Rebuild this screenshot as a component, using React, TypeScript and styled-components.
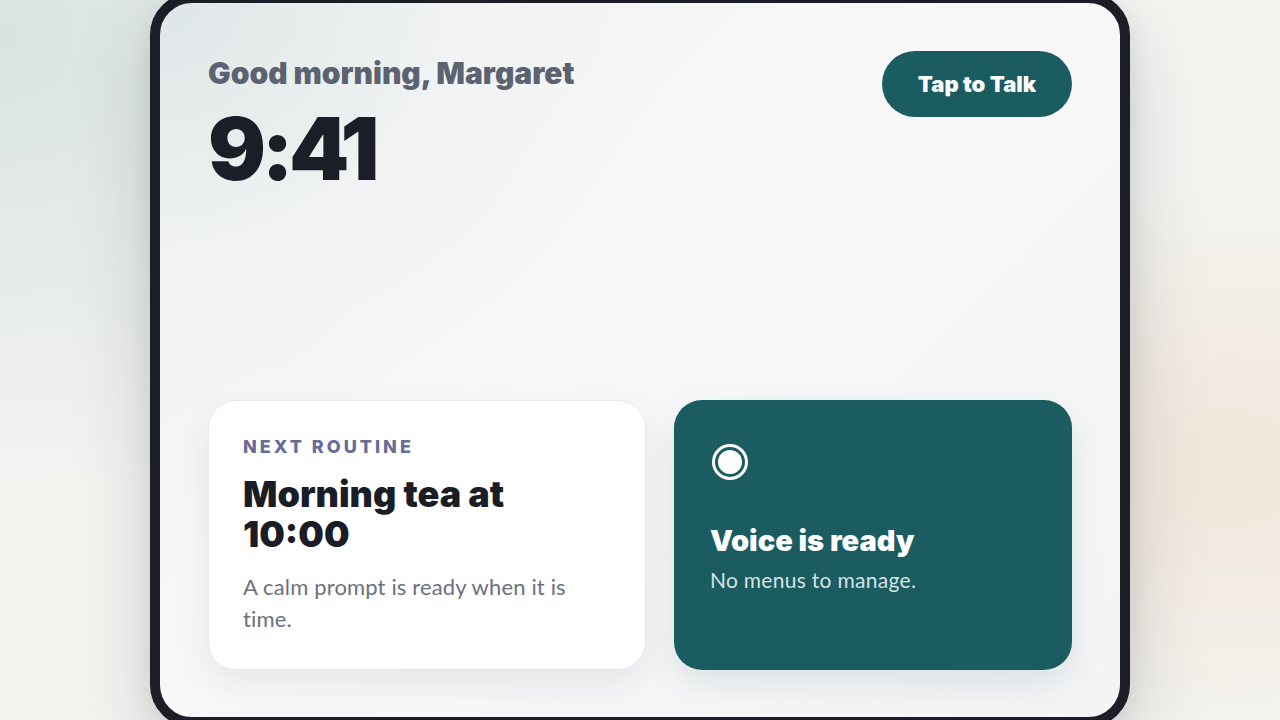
import React from "react";
import styled, { createGlobalStyle } from "styled-components";

const GlobalStyle = createGlobalStyle`
  * { box-sizing: border-box; }
  html, body { margin: 0; padding: 0; height: 100%; }
  body {
    font-family: "Lato", "Noto Sans", sans-serif;
    overflow: hidden;
  }
  #root { height: 100%; }
`;

const heavy = `"Inter", "Noto Sans", sans-serif`;

const Page = styled.main`
  height: 100vh;
  width: 100vw;
  display: flex;
  align-items: center;
  justify-content: center;
  background:
    radial-gradient(ellipse 55% 85% at 0% 5%, rgba(217, 227, 224, 1) 0%, rgba(217, 227, 224, 0) 75%),
    radial-gradient(ellipse 35% 50% at 96% 65%, rgba(241, 230, 218, 1) 0%, rgba(241, 230, 218, 0) 80%),
    #f4f4f1;
`;

const Device = styled.div`
  flex: none;
  width: 980px;
  height: 734px;
  border: 10px solid #1b1e27;
  border-radius: 42px;
  overflow: hidden;
  box-shadow: 0 30px 80px rgba(30, 40, 45, 0.18), 0 8px 24px rgba(30, 40, 45, 0.08);
  background:
    radial-gradient(ellipse 70% 80% at 0% 0%, #dfe6e7 0%, rgba(240, 242, 243, 0.6) 45%, rgba(247, 247, 248, 0) 75%),
    linear-gradient(135deg, #eef1f2 0%, #f8f8f8 45%, #f4f4f6 100%);
`;

const Screen = styled.div`
  height: 100%;
  padding: 48px;
  display: flex;
  flex-direction: column;
  justify-content: space-between;
`;

const TopRow = styled.header`
  display: flex;
  justify-content: space-between;
  align-items: flex-start;
`;

const Greeting = styled.div`
  display: flex;
  flex-direction: column;
`;

const Hello = styled.h2`
  margin: 0;
  font-family: ${heavy};
  font-size: 30px;
  line-height: 44px;
  font-weight: 900;
  color: #5a636f;
`;

const Clock = styled.h1`
  margin: 6px 0 0;
  font-family: ${heavy};
  font-size: 86px;
  line-height: 96px;
  font-weight: 900;
  letter-spacing: -4.5px;
  color: #1b1e26;
`;

const TalkButton = styled.button`
  width: 190px;
  height: 66px;
  border: none;
  border-radius: 33px;
  background: #1b5c60;
  color: #ffffff;
  font-family: ${heavy};
  font-size: 22px;
  font-weight: 900;
  cursor: pointer;
`;

const Cards = styled.section`
  display: grid;
  grid-template-columns: 1.1fr 1fr;
  gap: 28px;
  height: 269px;
`;

const RoutineCard = styled.article`
  background: #ffffff;
  border: 1px solid #e9e9ec;
  border-radius: 28px;
  padding: 34px 34px;
  box-shadow: 0 14px 34px rgba(30, 35, 45, 0.08);
`;

const Label = styled.div`
  font-family: ${heavy};
  font-size: 18px;
  line-height: 24px;
  font-weight: 800;
  letter-spacing: 3px;
  color: #666c98;
  text-transform: uppercase;
`;

const RoutineTitle = styled.h3`
  margin: 15px 0 0;
  font-family: ${heavy};
  font-size: 36px;
  line-height: 40px;
  font-weight: 900;
  color: #1a1d26;
`;

const Body = styled.p<{ $light?: boolean }>`
  margin: 17px 0 0;
  font-size: 22px;
  line-height: 32px;
  font-weight: 400;
  letter-spacing: 0.15px;
  color: ${(p) => (p.$light ? "#d3e2e1" : "#6b717c")};
`;

const VoiceCard = styled.article`
  background: #1b5c61;
  border-radius: 28px;
  padding: 44px 36px 34px;
  box-shadow: 0 14px 34px rgba(27, 92, 97, 0.12);
  color: #ffffff;
  display: flex;
  flex-direction: column;
`;

const ReadyDot = styled.div`
  width: 36px;
  height: 36px;
  margin-left: 2px;
  border: 3px solid #ffffff;
  border-radius: 50%;
  display: flex;
  align-items: center;
  justify-content: center;

  &::after {
    content: "";
    width: 24px;
    height: 24px;
    border-radius: 50%;
    background: #ffffff;
  }
`;

const VoiceTitle = styled.h3`
  margin: 43px 0 0;
  font-family: ${heavy};
  font-size: 29px;
  line-height: 36px;
  font-weight: 900;
  color: #ffffff;
`;

const VoiceBody = styled(Body)`
  margin-top: 5px;
  font-size: 21px;
  letter-spacing: 0.3px;
`;

export default function App() {
  return (
    <>
      <GlobalStyle />
      <Page>
        <Device>
          <Screen>
            <TopRow>
              <Greeting>
                <Hello>Good morning, Margaret</Hello>
                <Clock>9:41</Clock>
              </Greeting>
              <TalkButton>Tap to Talk</TalkButton>
            </TopRow>
            <Cards>
              <RoutineCard>
                <Label>Next routine</Label>
                <RoutineTitle>Morning tea at 10:00</RoutineTitle>
                <Body>A calm prompt is ready when it is time.</Body>
              </RoutineCard>
              <VoiceCard>
                <ReadyDot />
                <VoiceTitle>Voice is ready</VoiceTitle>
                <VoiceBody $light>No menus to manage.</VoiceBody>
              </VoiceCard>
            </Cards>
          </Screen>
        </Device>
      </Page>
    </>
  );
}
